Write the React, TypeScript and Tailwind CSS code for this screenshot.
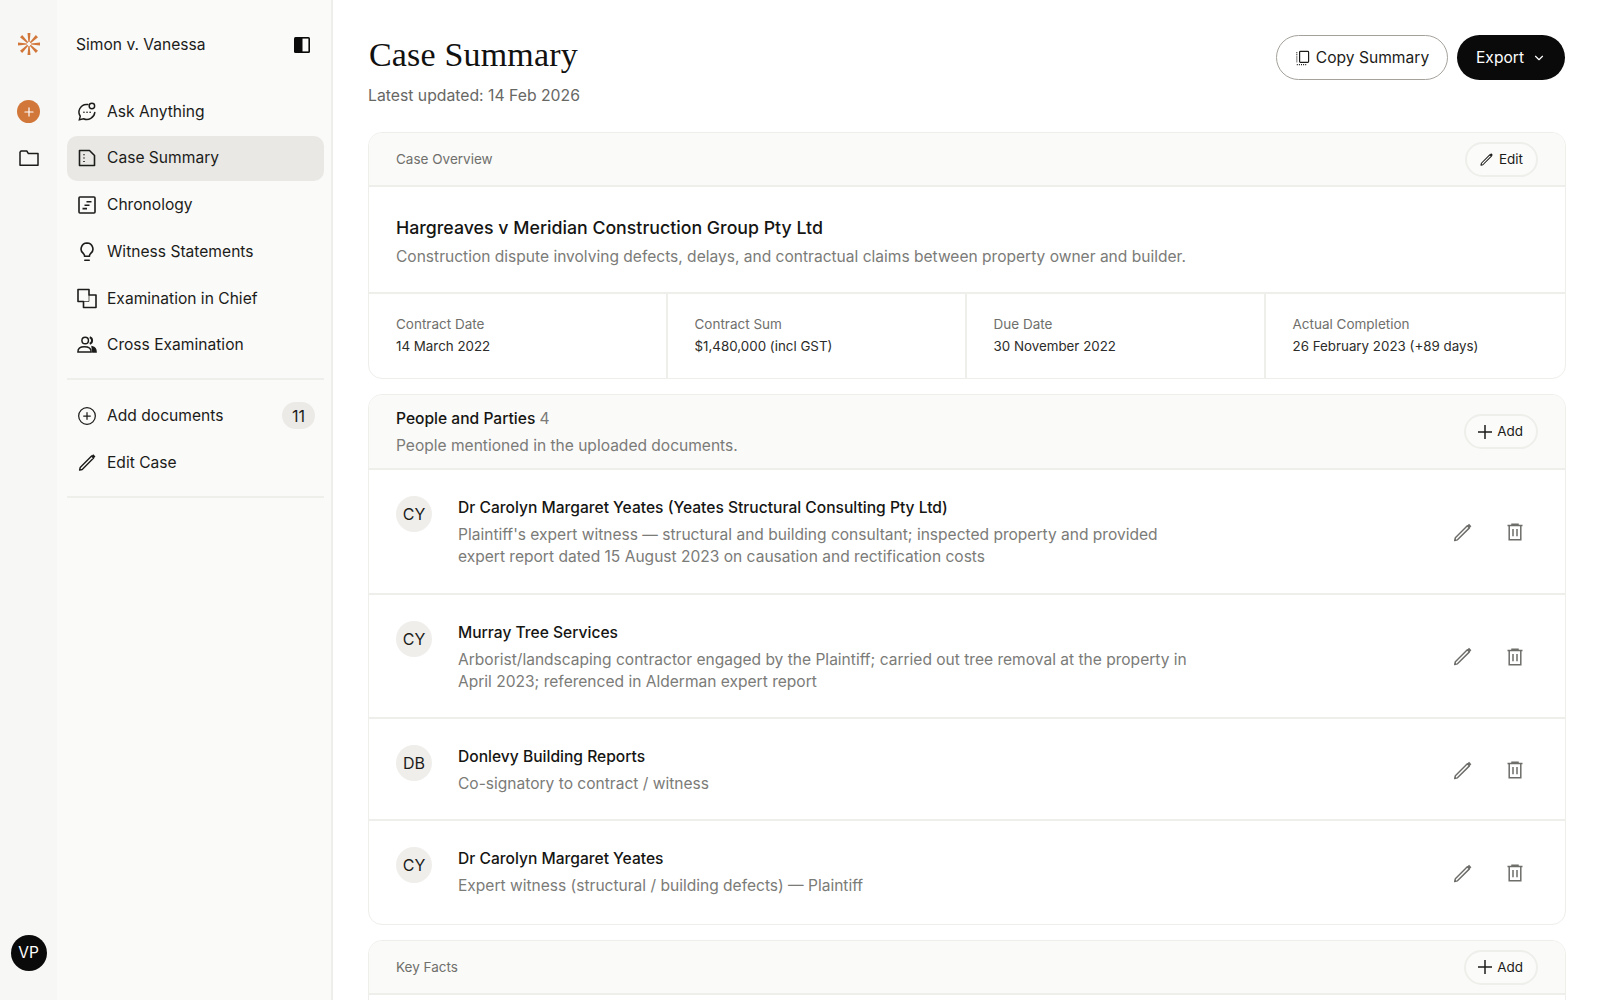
import { CirclePlus, ChevronDown, Plus } from "lucide-react";

function PenIcon({ className }: { className?: string }) {
  return (
    <svg viewBox="0 0 20 20" fill="none" stroke="currentColor" strokeWidth="1.4" strokeLinejoin="round" className={className}>
      <path d="M14.6 3.6 16.6 5.6 5.2 17 2.6 17.6 3.2 15Z" />
      <path d="M15.4 2.6 17.6 4.8" strokeWidth="2.4" />
    </svg>
  );
}

function TrashIcon({ className }: { className?: string }) {
  return (
    <svg viewBox="0 0 20 20" fill="none" stroke="currentColor" strokeWidth="1.5" className={className}>
      <path d="M2.5 3.6h15M7 3.6V2.2h6v1.4M4.2 3.6v14.1h11.6V3.6M8 7v7.2M12 7v7.2" />
    </svg>
  );
}

function AskIcon() {
  return (
    <svg viewBox="0 0 22 22" fill="none" stroke="currentColor" strokeWidth="1.6" strokeLinecap="round" className="w-[21px] h-[21px]">
      <path d="M12 3.4A8.6 8.6 0 0 0 3 8 8.4 8.4 0 0 0 3.6 16.2L2.6 20l4.6-1a8.8 8.8 0 0 0 12.4-7" />
      <circle cx="16.4" cy="5" r="3" />
      <path d="M7.6 11.8h.1M11 11.8h.1M14.4 11.8h.1" strokeWidth="1.8" />
    </svg>
  );
}

function SummaryIcon() {
  return (
    <svg viewBox="0 0 20 20" fill="none" stroke="currentColor" strokeWidth="1.6" strokeLinejoin="round" className="w-5 h-5">
      <path d="M2.5 2.5h10L17.5 7.5V17.5H2.5Z" />
      <path d="M7 6.2v1M7 9.6v1M7 13v1" />
    </svg>
  );
}

function ChronologyIcon() {
  return (
    <svg viewBox="0 0 20 20" fill="none" stroke="currentColor" strokeWidth="1.6" className="w-5 h-5">
      <rect x="2" y="2" width="16" height="16" rx="1" />
      <path d="M9.5 6.8h5M7.5 10.2h5M5.5 13.6h4.5" />
    </svg>
  );
}

function BulbIcon() {
  return (
    <svg viewBox="0 0 20 20" fill="none" stroke="currentColor" strokeWidth="1.6" strokeLinejoin="round" className="w-5 h-5">
      <path d="M10 1a6 6 0 0 0-3.2 11c.5.4.7 1.2.7 2.2h5c0-1 .2-1.8.7-2.2A6 6 0 0 0 10 1Z" />
      <path d="M7.8 18.3h4.4" strokeLinecap="round" />
    </svg>
  );
}

function ExamIcon() {
  return (
    <svg viewBox="0 0 20 20" fill="none" stroke="currentColor" strokeWidth="1.6" strokeLinejoin="round" className="w-[21px] h-[21px]">
      <path d="M1 1H12V6.5H19V19H6.5V13H1Z" />
      <path d="M6.5 13H12V6.5" strokeWidth="0.7" />
    </svg>
  );
}

function PeopleIcon() {
  return (
    <svg viewBox="0 0 22 22" fill="none" stroke="currentColor" strokeWidth="1.6" className="w-[22px] h-[22px]">
      <circle cx="9" cy="6" r="3.6" />
      <path d="M1 18.6c0-4 3.2-5.6 7-5.6s7.6 1.6 7.6 5.6Z" />
      <path d="M14 2.4a3.8 3.8 0 0 1 0 7.2" strokeWidth="2.2" />
      <path d="M16.6 13c2.4.6 4.4 2 4.4 5.6h-3.6Z" fill="currentColor" />
    </svg>
  );
}

function PanelIcon() {
  return (
    <svg viewBox="0 0 18 18" className="w-[18px] h-[18px]" fill="none">
      <rect x="1" y="1" width="16" height="16" rx="1.5" fill="#0a0a0a" />
      <rect x="9.5" y="2.6" width="5.9" height="12.8" fill="#fafaf8" />
    </svg>
  );
}

function Logo() {
  return (
    <svg viewBox="0 0 24 24" className="w-[24px] h-[24px]" fill="#d2773a">
      <path d="M10.5 1h3L12.6 10h-1.2Z" />
      <path d="M10.5 23h3L12.6 14h-1.2Z" />
      <path d="M1 10.5v3L10 12.6v-1.2Z" />
      <path d="M23 10.5v3L14 12.6v-1.2Z" />
      <path d="M3 5.2 5.2 3 11.2 10.3 10.3 11.2Z" />
      <path d="M21 18.8 18.8 21 12.8 13.7 13.7 12.8Z" />
      <path d="M18.8 3 21 5.2 13.7 11.2 12.8 10.3Z" />
      <path d="M5.2 21 3 18.8 10.3 12.8 11.2 13.7Z" />
    </svg>
  );
}

function CopyIcon() {
  return (
    <svg viewBox="0 0 16 16" fill="none" stroke="currentColor" strokeWidth="1.2" className="w-4 h-4">
      <rect x="4.6" y="1.4" width="9" height="11" rx="0.8" />
      <path d="M1.8 2.2v10.8M1.8 14.6h10" strokeDasharray="1 1.1" />
    </svg>
  );
}

function ThinPlus() {
  return (
    <svg viewBox="0 0 14 14" fill="none" stroke="currentColor" strokeWidth="1.5" className="w-[14px] h-[14px]">
      <path d="M7 0v14M0 7h14" />
    </svg>
  );
}

function NavItem({ icon, label, active, badge }: { icon: React.ReactNode; label: string; active?: boolean; badge?: string }) {
  return (
    <div className={`flex items-center h-[45px] rounded-[10px] pl-[10px] pr-[9px] text-[15.6px] text-[#1c1c1a] ${active ? "bg-[#e9e8e5]" : ""}`}>
      <span className="w-[20px] flex justify-center shrink-0">{icon}</span>
      <span className="ml-[10px] flex-1">{label}</span>
      {badge && (
        <span className="w-[33px] h-[27px] rounded-full bg-[#ebeae7] flex items-center justify-center text-[16px]">{badge}</span>
      )}
    </div>
  );
}

function Stat({ label, value, width }: { label: string; value: string; width?: string }) {
  return (
    <div className={`pl-[27px] pt-[20px] ${width ? `${width} border-r-2 border-[#eeeeeb]` : "flex-1"}`}>
      <div className="text-[13.5px] leading-[20px] text-[#6f6f6c]">{label}</div>
      <div className="text-[13.35px] leading-[20px] mt-[2px] text-[#2c2c2a]">{value}</div>
    </div>
  );
}

function Person({ initials, name, lines, height }: { initials: string; name: string; lines: string[]; height: string }) {
  return (
    <div className={`flex border-b-2 border-[#eeeeeb] last:border-b-0 pl-[27px] pr-[40px] pt-[26px] ${height}`}>
      <div className="w-[36px] h-[36px] rounded-full bg-[#efeeeb] flex items-center justify-center text-[16px] text-[#1c1c1a] shrink-0">
        {initials}
      </div>
      <div className="ml-[26px] flex-1">
        <div className="text-[15.6px] leading-[24px] font-medium text-[#151513]">{name}</div>
        <div className="mt-[4px] text-[15.55px] leading-[22.3px] text-[#7b7b78]">
          {lines.map((l) => (
            <div key={l}>{l}</div>
          ))}
        </div>
      </div>
      <div className="flex items-center gap-[32px] self-stretch pb-[24px] text-[#6d6d6a]">
        <PenIcon className="w-[21px] h-[21px]" />
        <TrashIcon className="w-[20px] h-[20px]" />
      </div>
    </div>
  );
}

function SmallButton({ icon, label }: { icon: React.ReactNode; label: string }) {
  return (
    <button className="h-[35px] pl-[12px] pr-[13px] rounded-full border-2 border-[#eeeeeb] bg-[#fbfbf9] flex items-center gap-[5px] text-[13.5px] text-[#1c1c1a]">
      {icon}
      {label}
    </button>
  );
}

export default function App() {
  return (
    <div className="flex h-screen w-full overflow-hidden bg-white font-['Inter',sans-serif] text-[#1c1c1a]">
      <aside className="w-[57px] shrink-0 bg-[#f7f7f5] flex flex-col items-center pt-[32px] pb-[29px]">
        <Logo />
        <div className="mt-[44px] w-[23px] h-[23px] rounded-full bg-[#d2773a] flex items-center justify-center text-white">
          <Plus className="w-[14px] h-[14px]" strokeWidth={2} />
        </div>
        <svg viewBox="0 0 20 18" fill="none" stroke="#1c1c1a" strokeWidth="1.5" strokeLinejoin="round" className="mt-[25.5px] w-[20px] h-[18px]">
          <path d="M1 3.2V16.2H19V4.6H9.4L7.8 2H2Z" />
        </svg>
        <div className="mt-auto w-[36px] h-[36px] rounded-full bg-[#0a0a0a] text-white flex items-center justify-center text-[15.5px]">
          VP
        </div>
      </aside>

      <nav className="w-[276px] shrink-0 bg-[#fafaf8] border-r-2 border-[#eeeeeb] pl-[10px] pr-[7px]">
        <div className="h-[89px] flex items-center justify-between pl-[9px] pr-[13px]">
          <span className="text-[15.6px]">Simon v. Vanessa</span>
          <PanelIcon />
        </div>
        <div className="flex flex-col gap-[1.7px]">
          <NavItem icon={<AskIcon />} label="Ask Anything" />
          <NavItem icon={<SummaryIcon />} label="Case Summary" active />
          <NavItem icon={<ChronologyIcon />} label="Chronology" />
          <NavItem icon={<BulbIcon />} label="Witness Statements" />
          <NavItem icon={<ExamIcon />} label="Examination in Chief" />
          <NavItem icon={<PeopleIcon />} label="Cross Examination" />
        </div>
        <div className="mt-[11px] mb-[13px] h-[2px] bg-[#eeeeeb]" />
        <div className="flex flex-col gap-[1.7px]">
          <NavItem icon={<CirclePlus className="w-[22px] h-[22px]" strokeWidth={1.5} />} label="Add documents" badge="11" />
          <NavItem icon={<PenIcon className="w-[21px] h-[21px]" />} label="Edit Case" />
        </div>
        <div className="mt-[11px] h-[2px] bg-[#eeeeeb]" />
      </nav>

      <main className="flex-1 min-w-0 pl-[35px] pr-[34px] flex flex-col">
        <header className="flex justify-between pt-[35px] h-[132px] shrink-0">
          <div>
            <h1 className="font-['Liberation_Serif',serif] pl-[1px] text-[34px] leading-[40px] tracking-[0.005em] text-[#111110]">Case Summary</h1>
            <p className="mt-[8.5px] text-[15.75px] leading-[24px] text-[#676764]">Latest updated: 14 Feb 2026</p>
          </div>
          <div className="flex gap-[9px] mr-[1px]">
            <button className="h-[45px] w-[172px] rounded-full border-[1.5px] border-[#a5a29c] flex items-center justify-center gap-[5px] text-[15.6px] text-[#1c1c1a]">
              <CopyIcon />
              Copy Summary
            </button>
            <button className="h-[45px] w-[108px] rounded-full bg-[#0a0a0a] text-white flex items-center justify-center gap-[8px] text-[15.6px]">
              Export
              <ChevronDown className="w-[14px] h-[14px]" strokeWidth={2} />
            </button>
          </div>
        </header>

        <section className="rounded-[14px] border border-[#eeeeeb] shrink-0 overflow-hidden">
          <div className="h-[54px] bg-[#fafaf8] border-b-2 border-[#eeeeeb] flex items-center justify-between pl-[27px] pr-[27px]">
            <span className="text-[13.5px] mt-[1px] text-[#6f6f6c]">Case Overview</span>
            <SmallButton icon={<PenIcon className="w-[15px] h-[15px]" />} label="Edit" />
          </div>
          <div className="h-[107px] border-b-2 border-[#eeeeeb] pl-[27px] pt-[27.5px]">
            <div className="text-[17.75px] leading-[26px] font-medium text-[#151513]">Hargreaves v Meridian Construction Group Pty Ltd</div>
            <div className="mt-[4px] text-[15.55px] leading-[24px] text-[#7b7b78]">
              Construction dispute involving defects, delays, and contractual claims between property owner and builder.
            </div>
          </div>
          <div className="flex h-[83.5px]">
            <Stat label="Contract Date" value="14 March 2022" width="w-[298.5px]" />
            <Stat label="Contract Sum" value="$1,480,000 (incl GST)" width="w-[299px]" />
            <Stat label="Due Date" value="30 November 2022" width="w-[299px]" />
            <Stat label="Actual Completion" value="26 February 2023 (+89 days)" />
          </div>
        </section>

        <section className="mt-[15.5px] rounded-[14px] border border-[#eeeeeb] shrink-0 overflow-hidden">
          <div className="h-[75px] bg-[#fafaf8] border-b-2 border-[#eeeeeb] flex items-center justify-between pl-[27px] pr-[27px]">
            <div className="pt-[1px]">
              <div className="text-[15.6px] leading-[24px] font-medium text-[#151513]">
                People and Parties <span className="font-normal text-[#7b7b78]">4</span>
              </div>
              <div className="mt-[3.5px] text-[15.55px] leading-[22px] text-[#7b7b78]">People mentioned in the uploaded documents.</div>
            </div>
            <SmallButton icon={<ThinPlus />} label="Add" />
          </div>
          <Person
            initials="CY"
            name="Dr Carolyn Margaret Yeates (Yeates Structural Consulting Pty Ltd)"
            lines={[
              "Plaintiff's expert witness — structural and building consultant; inspected property and provided",
              "expert report dated 15 August 2023 on causation and rectification costs",
            ]}
            height="h-[124.5px]"
          />
          <Person
            initials="CY"
            name="Murray Tree Services"
            lines={[
              "Arborist/landscaping contractor engaged by the Plaintiff; carried out tree removal at the property in",
              "April 2023; referenced in Alderman expert report",
            ]}
            height="h-[124.5px]"
          />
          <Person initials="DB" name="Donlevy Building Reports" lines={["Co-signatory to contract / witness"]} height="h-[102px]" />
          <Person initials="CY" name="Dr Carolyn Margaret Yeates" lines={["Expert witness (structural / building defects) — Plaintiff"]} height="h-[102.5px]" />
        </section>

        <section className="mt-[15.5px] rounded-t-[14px] border border-[#eeeeeb] shrink-0 overflow-hidden h-[100px]">
          <div className="h-[54px] bg-[#fafaf8] border-b-2 border-[#eeeeeb] flex items-center justify-between pl-[27px] pr-[27px]">
            <span className="text-[13.5px] text-[#6f6f6c]">Key Facts</span>
            <SmallButton icon={<ThinPlus />} label="Add" />
          </div>
        </section>
      </main>
    </div>
  );
}
